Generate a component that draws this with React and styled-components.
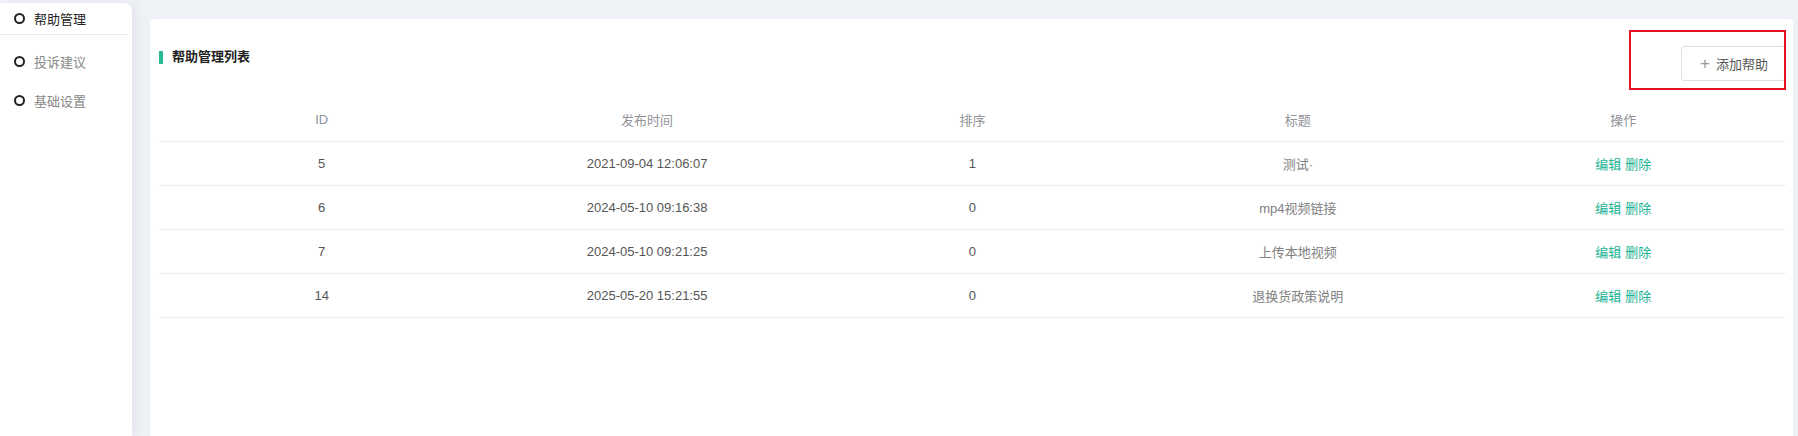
import React from 'react'
import styled, { createGlobalStyle } from 'styled-components'

const GlobalStyle = createGlobalStyle`
  body {
    margin: 0;
    background: #eef1f5;
    font-family: "Liberation Sans", "Noto Sans CJK SC", sans-serif;
  }
`

const Page = styled.div`
  display: flex;
  height: 436px;
  overflow: hidden;
`

const Sidebar = styled.aside`
  width: 132px;
  flex: none;
  margin-top: 3px;
  background: #fff;
  border-top-right-radius: 8px;
  box-shadow: 4px 0 10px rgba(0, 0, 0, 0.05);
`

const NavItem = styled.div`
  display: flex;
  align-items: center;
  gap: 9px;
  height: ${p => (p.active ? '31px' : '39px')};
  padding-left: 14px;
  margin-right: 4px;
  font-size: 13px;
  color: ${p => (p.active ? '#222' : '#888')};
  border-bottom: ${p => (p.active ? '1px solid #e8e8f0' : 'none')};
`

const NavGroup = styled.div`
  padding-top: 7px;
`

const Dot = styled.span`
  width: 7px;
  height: 7px;
  border: 2px solid #222;
  border-radius: 50%;
  flex: none;
`

const Main = styled.main`
  flex: 1;
  display: flex;
  padding: 19px 5px 0 18px;
`

const Card = styled.section`
  flex: 1;
  background: #fff;
  border-radius: 4px 4px 0 0;
  padding: 27px 7px 0 9px;
`

const Header = styled.div`
  position: relative;
  display: flex;
  justify-content: space-between;
  align-items: flex-start;
`

const Title = styled.h3`
  margin: 1px 0 0;
  display: flex;
  align-items: center;
  gap: 9px;
  font-size: 13px;
  line-height: 20px;
  font-weight: 600;
  color: #222;

  &::before {
    content: '';
    width: 4px;
    height: 13px;
    background: #2bb894;
  }
`

const AddButton = styled.button`
  display: flex;
  align-items: center;
  gap: 6px;
  height: 35px;
  padding: 0 17px 0 18px;
  border: 1px solid #dcdfe6;
  border-radius: 3px;
  background: #fff;
  font-family: inherit;
  font-size: 13px;
  color: #555;
`

const Plus = styled.span`
  font-size: 17px;
  font-weight: 300;
  color: #999;
  line-height: 1;
`

const Highlight = styled.div`
  position: absolute;
  right: 0;
  top: -16px;
  width: 153px;
  height: 56px;
  border: 2px solid #e81123;
  pointer-events: none;
`

const Table = styled.table`
  width: 100%;
  margin-top: 17px;
  border-collapse: collapse;
  table-layout: fixed;
  font-size: 13px;
`

const Th = styled.th`
  height: 43px;
  padding: 0;
  font-weight: 400;
  color: #909399;
  border-bottom: 1px solid #ebeef5;
`

const Td = styled.td`
  height: 43px;
  padding: 0;
  text-align: center;
  color: ${p => (p.muted ? '#808080' : '#555')};
  border-bottom: 1px solid #ebeef5;
`

const Link = styled.a`
  color: #1ab394;
  cursor: pointer;
  & + & {
    margin-left: 4px;
  }
`

const rows = [
  { id: 5, time: '2021-09-04 12:06:07', sort: 1, title: '测试·' },
  { id: 6, time: '2024-05-10 09:16:38', sort: 0, title: 'mp4视频链接' },
  { id: 7, time: '2024-05-10 09:21:25', sort: 0, title: '上传本地视频' },
  { id: 14, time: '2025-05-20 15:21:55', sort: 0, title: '退换货政策说明' },
]

const App = () => {
  return (
    <>
      <GlobalStyle />
      <Page>
        <Sidebar>
          <NavItem active><Dot />帮助管理</NavItem>
          <NavGroup>
            <NavItem><Dot />投诉建议</NavItem>
            <NavItem><Dot />基础设置</NavItem>
          </NavGroup>
        </Sidebar>
        <Main>
          <Card>
            <Header>
              <Title>帮助管理列表</Title>
              <AddButton><Plus>+</Plus>添加帮助</AddButton>
              <Highlight />
            </Header>
            <Table>
              <thead>
                <tr>
                  <Th>ID</Th>
                  <Th>发布时间</Th>
                  <Th>排序</Th>
                  <Th>标题</Th>
                  <Th>操作</Th>
                </tr>
              </thead>
              <tbody>
                {rows.map(r => (
                  <tr key={r.id}>
                    <Td>{r.id}</Td>
                    <Td>{r.time}</Td>
                    <Td>{r.sort}</Td>
                    <Td muted>{r.title}</Td>
                    <Td>
                      <Link>编辑</Link>
                      <Link>删除</Link>
                    </Td>
                  </tr>
                ))}
              </tbody>
            </Table>
          </Card>
        </Main>
      </Page>
    </>
  )
}

export default App
